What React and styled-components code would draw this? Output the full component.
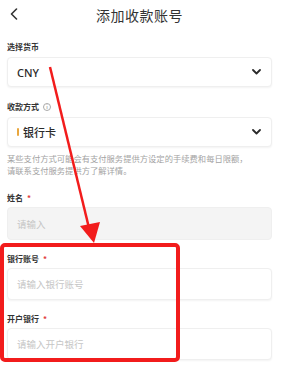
import React from 'react';
import styled, { createGlobalStyle } from 'styled-components';

const Global = createGlobalStyle`
  html, body { margin: 0; padding: 0; background: #ffffff; }
  body {
    font-family: "Noto Sans CJK SC", "Noto Sans", sans-serif;
    color: #222;
    width: 282px;
    height: 365px;
    overflow: hidden;
  }
`

const Page = styled.div`
  position: relative;
  width: 282px;
  height: 365px;
  box-sizing: border-box;
  padding: 0 10px 0 7px;
`

const Header = styled.div`
  position: relative;
  height: 30px;
  display: flex;
  align-items: center;
  justify-content: center;
`

const Back = styled.span`
  position: absolute;
  left: 3px;
  top: 8px;
  display: flex;
`

const Title = styled.h1`
  margin: 0;
  font-size: 14px;
  font-weight: 400;
  color: #333;
  letter-spacing: 0.5px;
`

const Form = styled.div`
  display: flex;
  flex-direction: column;
  padding-top: 12px;
`

const Field = styled.div`
  display: flex;
  flex-direction: column;
  gap: ${p => p.$gap ?? 4}px;
  margin-bottom: ${p => p.$after ?? 14}px;
`

const Label = styled.div`
  display: flex;
  align-items: center;
  gap: 2px;
  height: 10px;
  font-size: 8px;
  line-height: 10px;
  font-weight: 700;
  color: #333;
`

const Star = styled.span`
  color: #e23a3a;
  margin-left: 2px;
`

const Info = styled.span`
  display: inline-flex;
  align-items: center;
  justify-content: center;
  width: 6px;
  height: 6px;
  border: 1px solid #aaa;
  border-radius: 50%;
  font-size: 5px;
  color: #aaa;
  margin-left: 2px;
`

const Box = styled.div`
  height: ${p => p.$h || 32}px;
  box-sizing: border-box;
  display: flex;
  align-items: center;
  padding: 0 10px 0 9px;
  border: 1px solid #efefef;
  border-radius: 4px;
  background: ${p => (p.$disabled ? '#f4f4f4' : '#ffffff')};
  box-shadow: ${p => (p.$disabled ? 'none' : '0 1px 2px rgba(0,0,0,0.05)')};
`

const Value = styled.span`
  flex: 1;
  font-family: "Noto Sans", "Noto Sans CJK SC", sans-serif;
  font-size: ${p => p.$size || 11}px;
  font-weight: 500;
  color: #2a2a2a;
  display: flex;
  align-items: center;
  gap: 4px;
`

const Bar = styled.span`
  width: 2px;
  height: 8px;
  background: #e9a73e;
  border-radius: 1px;
`

const Placeholder = styled.span`
  flex: 1;
  font-size: 9.5px;
  color: #c6c6c6;
`

const Hint = styled.p`
  margin: 5px 0 17px;
  font-size: 8.3px;
  line-height: 12px;
  color: #a3a3a3;
`

const Highlight = styled.div`
  position: absolute;
  left: 0;
  top: 243px;
  width: 180px;
  height: 119px;
  box-sizing: border-box;
  border: 4px solid #f21c1c;
  border-radius: 5px;
  pointer-events: none;
`

const Arrow = styled.svg`
  position: absolute;
  left: 0;
  top: 0;
  pointer-events: none;
`

const Chevron = () => (
  <svg width="9" height="6" viewBox="0 0 9 6">
    <path d="M1 1 L4.5 4.5 L8 1" fill="none" stroke="#2a2a2a" strokeWidth="1.8" strokeLinecap="round" strokeLinejoin="round" />
  </svg>
)

export default function App() {
  return (
    <Page>
      <Global />
      <Header>
        <Back>
          <svg width="8" height="12" viewBox="0 0 8 12">
            <path d="M6.5 1 L1.5 6 L6.5 11" fill="none" stroke="#333" strokeWidth="1.6" strokeLinecap="round" strokeLinejoin="round" />
          </svg>
        </Back>
        <Title>添加收款账号</Title>
      </Header>

      <Form>
        <Field $gap={5} $after={15}>
          <Label>选择货币</Label>
          <Box $h={30}>
            <Value>CNY</Value>
            <Chevron />
          </Box>
        </Field>

        <Field $gap={5} $after={0}>
          <Label>收款方式<Info>i</Info></Label>
          <Box $h={30}>
            <Value $size={11}><Bar />银行卡</Value>
            <Chevron />
          </Box>
        </Field>
        <Hint>
          某些支付方式可能会有支付服务提供方设定的手续费和每日限额，<br />
          请联系支付服务提供方了解详情。
        </Hint>

        <Field>
          <Label>姓名<Star>*</Star></Label>
          <Box $h={33} $disabled>
            <Placeholder>请输入</Placeholder>
          </Box>
        </Field>

        <Field>
          <Label>银行账号<Star>*</Star></Label>
          <Box>
            <Placeholder>请输入银行账号</Placeholder>
          </Box>
        </Field>

        <Field>
          <Label>开户银行<Star>*</Star></Label>
          <Box>
            <Placeholder>请输入开户银行</Placeholder>
          </Box>
        </Field>
      </Form>

      <Highlight />
      <Arrow width="282" height="365" viewBox="0 0 282 365">
        <line x1="50" y1="67" x2="89" y2="228" stroke="#f21c1c" strokeWidth="2.5" />
        <polygon points="80,226 100,222 94,243" fill="#f21c1c" />
      </Arrow>
    </Page>
  );
}
